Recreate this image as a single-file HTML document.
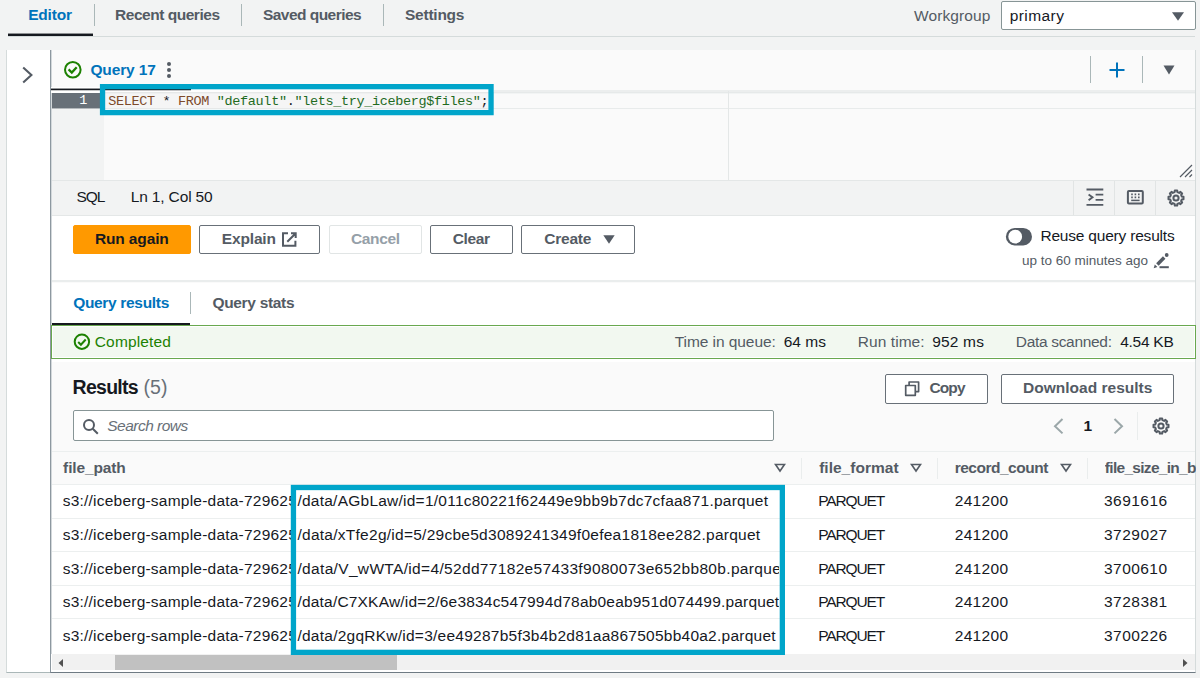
<!DOCTYPE html>
<html><head><meta charset="utf-8"><title>Athena query editor</title>
<style>
*{box-sizing:border-box;margin:0;padding:0}
html,body{width:1200px;height:678px;overflow:hidden;background:#f2f3f3}
body{position:relative;font-family:"Liberation Sans",sans-serif;font-size:15.5px;color:#16191f}
.a{position:absolute}
.t{position:absolute;white-space:pre;line-height:20px}
.btn{position:absolute;border:1px solid #687078;border-radius:2px;background:#fff;height:29px;top:225px}
.sep{position:absolute;width:1px;background:#d5dbdb}
.rl{position:absolute;left:52px;width:1143px;height:1px;background:#ecefef}
.cy{position:absolute;border:5px solid #00a1c9;z-index:5}
</style></head><body>

<!-- top tabs -->
<div class="sep" style="left:94px;top:4px;height:22px;background:#aab7b8"></div>
<div class="sep" style="left:241px;top:4px;height:22px;background:#aab7b8"></div>
<div class="sep" style="left:383px;top:4px;height:22px;background:#aab7b8"></div>
<div class="a" style="left:8px;top:36px;width:1187px;height:1px;background:#d5dbdb"></div>
<div class="a" style="left:8px;top:33px;width:85px;height:3px;background:linear-gradient(rgba(22,25,31,.45) 0 1px,#16191f 1px 3px)"></div>
<div class="a" style="left:1001px;top:1px;width:195px;height:29px;background:#fff;border:1px solid #879596;border-radius:2px"></div>
<svg class="a" style="left:1171px;top:11px" width="14" height="11" viewBox="0 0 14 11"><path d="M1 1.2h12L7 9.8z" fill="#545b64"/></svg>

<!-- left panel -->
<div class="a" style="left:6px;top:50px;width:45px;height:623px;background:#fff;border-left:1px solid #d5dbdb;border-bottom:1px solid #aab7b8"></div>
<svg class="a" style="left:20px;top:65px" width="16" height="20" viewBox="0 0 16 20"><path d="M3.2 2.4L11.4 9.9 3.2 17.4" fill="none" stroke="#545b64" stroke-width="2.1"/></svg>

<!-- main panel -->
<div class="a" style="left:50px;top:50px;width:1146px;height:623px;background:#fafafa;border-left:1px solid #8d98a0;box-shadow:inset 1px 0 0 #d3d8db;border-right:1px solid #d5dbdb;border-bottom:1px solid #6f7b84"></div>

<!-- query tab row -->
<svg class="a" style="left:63px;top:60px" width="20" height="20" viewBox="0 0 20 20"><circle cx="9.8" cy="9.7" r="7.8" fill="none" stroke="#1d8102" stroke-width="2"/><path d="M5.6 9.4l3.2 3.1 4.9-5.2" fill="none" stroke="#1d8102" stroke-width="2.3"/></svg>
<div class="a" style="left:167px;top:62px;width:4px;height:4px;border-radius:50%;background:#545b64;box-shadow:0 6px 0 #545b64,0 12px 0 #545b64"></div>
<div class="sep" style="left:1090px;top:56px;height:27px;background:#aab7b8"></div>
<div class="sep" style="left:1142px;top:56px;height:27px;background:#aab7b8"></div>
<svg class="a" style="left:1108px;top:61px" width="18" height="18" viewBox="0 0 18 18"><path d="M9 1.5v15M1.5 9h15" stroke="#0073bb" stroke-width="2" fill="none"/></svg>
<svg class="a" style="left:1163px;top:65px" width="12" height="10" viewBox="0 0 12 10"><path d="M0.5 0.5h11L6 9.5z" fill="#545b64"/></svg>

<!-- editor -->
<div class="a" style="left:52px;top:91px;width:52px;height:89px;background:#f2f3f3"></div>
<div class="a" style="left:51px;top:87px;width:55px;height:6px;background:#fff"></div>
<div class="a" style="left:104px;top:89px;width:390px;height:21px;background:#f5f5f5;border-top:3px solid #fdfdfd;border-bottom:1px solid #fcfcfc"></div>
<div class="a" style="left:104px;top:92px;width:390px;height:2px;background:linear-gradient(#e6e8e8 0 1px,#eff0f0 1px 2px)"></div>
<div class="a" style="left:104px;top:108px;width:390px;height:1px;background:#e6e8e8"></div>
<div class="a" style="left:494px;top:90px;width:701px;height:4px;background:linear-gradient(#eceeee 0 2px,#e6e9e9 2px 3px,#f2f4f4 3px 4px)"></div>
<div class="a" style="left:494px;top:108px;width:701px;height:1px;background:#e8ebeb"></div>
<div class="a" style="left:51px;top:88px;width:140px;height:3px;background:linear-gradient(rgba(22,25,31,.45) 0 1px,#16191f 1px 2px,rgba(22,25,31,.25) 2px 3px)"></div>
<div class="a" style="left:52px;top:93px;width:52px;height:16px;background:linear-gradient(#687078 0 15px,rgba(104,112,120,.45) 15px 16px)"></div>
<div class="sep" style="left:728px;top:91px;height:89px;background:#e4e7e7"></div>
<svg class="a" style="left:0;top:0;z-index:5" width="1200" height="678"><rect x="102.55" y="86.65" width="388.5" height="25.95" fill="none" stroke="#00a5ca" stroke-width="5.3"/><rect x="293.45" y="487.5" width="488.9" height="164.85" fill="none" stroke="#00a5ca" stroke-width="5.3"/></svg>
<svg class="a" style="left:1179px;top:164px" width="14" height="14" viewBox="0 0 14 14"><path d="M1 13L13 1M6 13l7-7M10.5 13l2.5-2.5" stroke="#545b64" stroke-width="1.2" fill="none"/></svg>

<!-- status bar -->
<div class="a" style="left:52px;top:180px;width:1143px;height:36px;background:#f2f3f3;border-top:1px solid #e4e7e7;border-bottom:1px solid #e4e7e7"></div>
<div class="sep" style="left:1073px;top:181px;height:34px;background:#e1e4e4"></div>
<div class="sep" style="left:1114px;top:181px;height:34px;background:#e1e4e4"></div>
<div class="sep" style="left:1155px;top:181px;height:34px;background:#e1e4e4"></div>

<svg class="a" style="left:1085.5px;top:187.8px" width="18" height="19" viewBox="0 0 18 19"><path d="M0.5 1.5h16.8M9.6 6.6h7.7M9.6 11.9h7.7M0.5 16.9h16.8" stroke="#545b64" stroke-width="1.9" fill="none"/><path d="M2.6 6.4l3.9 2.9-3.9 2.9" stroke="#545b64" stroke-width="1.9" fill="none"/></svg>
<svg class="a" style="left:1126px;top:188.8px" width="19" height="17" viewBox="0 0 19 17"><rect x="1.9" y="2" width="14.9" height="12.4" rx="1" fill="none" stroke="#545b64" stroke-width="2"/><path d="M5.2 5.4h1.6M8.6 5.4h1.6M12 5.4h1.6M5.2 8.4h1.6M8.6 8.4h1.6M12 8.4h1.6" stroke="#545b64" stroke-width="1.6"/><path d="M5.2 11.4h8.4" stroke="#545b64" stroke-width="1.5"/></svg>
<svg class="a" style="left:1166.9px;top:188.7px" width="18" height="18" viewBox="0 0 18 18"><path d="M7.60 3.17 L7.81 1.49 L10.19 1.49 L10.40 3.17 L12.13 3.88 L13.47 2.85 L15.15 4.53 L14.12 5.87 L14.83 7.60 L16.51 7.81 L16.51 10.19 L14.83 10.40 L14.12 12.13 L15.15 13.47 L13.47 15.15 L12.13 14.12 L10.40 14.83 L10.19 16.51 L7.81 16.51 L7.60 14.83 L5.87 14.12 L4.53 15.15 L2.85 13.47 L3.88 12.13 L3.17 10.40 L1.49 10.19 L1.49 7.81 L3.17 7.60 L3.88 5.87 L2.85 4.53 L4.53 2.85 L5.87 3.88Z" fill="none" stroke="#545b64" stroke-width="2" stroke-linejoin="round"/><circle cx="9" cy="9" r="2.6" fill="none" stroke="#545b64" stroke-width="2"/></svg>

<!-- buttons row -->
<div class="a" style="left:52px;top:216px;width:1143px;height:66px;background:#fff;border-bottom:2px solid #eaeded"></div>
<div class="btn" style="left:73px;width:118px;background:#ff9900;border-color:#ff9900"></div>
<div class="btn" style="left:199px;width:121px"></div>
<div class="btn" style="left:329px;width:93px;border-color:#e1e5e5"></div>
<div class="btn" style="left:430px;width:83px"></div>
<div class="btn" style="left:521px;width:114px"></div>
<svg class="a" style="left:603px;top:235px" width="12" height="9" viewBox="0 0 12 9"><path d="M0.3 0.3h11.4L6 8.7z" fill="#545b64"/></svg>
<svg class="a" style="left:281px;top:231px" width="17" height="17" viewBox="0 0 17 17"><path d="M7 2.3H2v12.4h12.4V9.7M10 2.3h4.7V7M14.5 2.5L6.3 10.7" stroke="#545b64" stroke-width="2" fill="none"/></svg>
<svg class="a" style="left:1000px;top:222px" width="40" height="30" viewBox="0 0 40 30"><rect x="5.9" y="5.9" width="26.1" height="17.5" rx="8.75" fill="#545b64"/><circle cx="15.2" cy="14.7" r="6.9" fill="#fff"/></svg>
<svg class="a" style="left:1153px;top:252px" width="17" height="17" viewBox="0 0 17 17"><path d="M0.7 16.2l1.1-3.7 2.6 2.6z" fill="#545b64"/><path d="M4.4 12.4L11.2 5.6" stroke="#545b64" stroke-width="3.5"/><circle cx="13.7" cy="3" r="1.9" fill="#545b64"/><path d="M6.5 15.2h9.3" stroke="#545b64" stroke-width="2"/></svg>

<!-- result tabs -->
<div class="a" style="left:52px;top:283px;width:1143px;height:42px;background:#fff"></div>
<div class="sep" style="left:190px;top:292px;height:22px;background:#aab7b8"></div>
<div class="a" style="left:52px;top:322.5px;width:138px;height:2px;background:#16191f"></div>

<!-- completed banner -->
<div class="a" style="left:51px;top:325px;width:1145px;height:34px;background:#f2f8f0;border:1px solid #69a84f;box-shadow:inset 0 0 0 1px #fff"></div>
<svg class="a" style="left:72px;top:332px" width="20" height="20" viewBox="0 0 20 20"><circle cx="9.9" cy="9.7" r="7.2" fill="none" stroke="#1d8102" stroke-width="2"/><path d="M6.2 10l2.7 2.7 4.8-5.2" fill="none" stroke="#1d8102" stroke-width="2"/></svg>

<div class="a" style="left:52px;top:359px;width:1143px;height:3px;background:#fff"></div>
<!-- results header -->
<div class="btn" style="left:885px;top:374px;width:103px;height:30px"></div>
<div class="btn" style="left:1001px;top:374px;width:173px;height:30px"></div>
<svg class="a" style="left:903px;top:380px" width="18" height="18" viewBox="0 0 18 18"><path d="M2.7 5.5h9.6v9.8H2.7z M6.1 5.2V2h9.5v9.6h-3" fill="none" stroke="#545b64" stroke-width="1.7" stroke-linejoin="round"/></svg>
<div class="a" style="left:73px;top:410px;width:701px;height:31px;background:#fff;border:1px solid #879596;border-radius:2px"></div>
<svg class="a" style="left:82px;top:418px" width="18" height="18" viewBox="0 0 18 18"><circle cx="7" cy="7" r="5" fill="none" stroke="#545b64" stroke-width="2"/><path d="M10.8 10.8l5 5" stroke="#545b64" stroke-width="2"/></svg>
<svg class="a" style="left:1051px;top:416px" width="14" height="20" viewBox="0 0 14 20"><path d="M11.5 3L4 10.2l7.5 7.2" fill="none" stroke="#9ba7a9" stroke-width="2"/></svg>
<svg class="a" style="left:1112px;top:416px" width="14" height="20" viewBox="0 0 14 20"><path d="M2.5 3L10 10.2l-7.5 7.2" fill="none" stroke="#9ba7a9" stroke-width="2"/></svg>
<div class="sep" style="left:1137px;top:412px;height:28px;background:#eaeded"></div>

<svg class="a" style="left:1151.5px;top:417px" width="18" height="18" viewBox="0 0 18 18"><path d="M7.60 3.17 L7.81 1.49 L10.19 1.49 L10.40 3.17 L12.13 3.88 L13.47 2.85 L15.15 4.53 L14.12 5.87 L14.83 7.60 L16.51 7.81 L16.51 10.19 L14.83 10.40 L14.12 12.13 L15.15 13.47 L13.47 15.15 L12.13 14.12 L10.40 14.83 L10.19 16.51 L7.81 16.51 L7.60 14.83 L5.87 14.12 L4.53 15.15 L2.85 13.47 L3.88 12.13 L3.17 10.40 L1.49 10.19 L1.49 7.81 L3.17 7.60 L3.88 5.87 L2.85 4.53 L4.53 2.85 L5.87 3.88Z" fill="none" stroke="#545b64" stroke-width="2" stroke-linejoin="round"/><circle cx="9" cy="9" r="2.6" fill="none" stroke="#545b64" stroke-width="2"/></svg>

<!-- table -->
<div class="rl" style="top:451px"></div>
<div class="a" style="left:52px;top:484px;width:1143px;height:171px;background:#fff"></div>
<div class="rl" style="top:484px"></div>
<div class="rl" style="top:518px"></div>
<div class="rl" style="top:551px"></div>
<div class="rl" style="top:585px"></div>
<div class="rl" style="top:618px"></div>
<div class="sep" style="left:801px;top:458px;height:21px;background:#eaeded"></div>
<div class="sep" style="left:937px;top:458px;height:21px;background:#eaeded"></div>
<div class="sep" style="left:1087px;top:458px;height:21px;background:#eaeded"></div>
<svg class="a" style="left:774px;top:463px" width="12" height="10" viewBox="0 0 12 10"><path d="M1.5 1.5h9L6 8z" fill="none" stroke="#545b64" stroke-width="1.6"/></svg>
<svg class="a" style="left:910px;top:463px" width="12" height="10" viewBox="0 0 12 10"><path d="M1.5 1.5h9L6 8z" fill="none" stroke="#545b64" stroke-width="1.6"/></svg>
<svg class="a" style="left:1060px;top:463px" width="12" height="10" viewBox="0 0 12 10"><path d="M1.5 1.5h9L6 8z" fill="none" stroke="#545b64" stroke-width="1.6"/></svg>

<!-- scrollbar -->
<div class="a" style="left:51px;top:654px;width:1144px;height:18px;background:#fff"></div><div class="a" style="left:52px;top:654px;width:1143px;height:16px;background:#f1f1f1"></div>
<div class="a" style="left:115px;top:655px;width:282px;height:15px;background:#c1c1c1"></div>
<svg class="a" style="left:57px;top:658px" width="8" height="10" viewBox="0 0 8 10"><path d="M6 1v8L1.5 5z" fill="#505050"/></svg>
<svg class="a" style="left:1181px;top:658px" width="8" height="10" viewBox="0 0 8 10"><path d="M2 1v8L6.5 5z" fill="#505050"/></svg>

<div class="t" style='left:28.20px;top:5px;font-size:15.5px;letter-spacing:-0.196px;color:#0073bb;font-weight:bold;'>Editor</div>
<div class="t" style='left:115.00px;top:5px;font-size:15.5px;letter-spacing:-0.468px;color:#545b64;font-weight:bold;'>Recent queries</div>
<div class="t" style='left:262.97px;top:5px;font-size:15.5px;letter-spacing:-0.538px;color:#545b64;font-weight:bold;'>Saved queries</div>
<div class="t" style='left:404.97px;top:5px;font-size:15.5px;letter-spacing:-0.236px;color:#545b64;font-weight:bold;'>Settings</div>
<div class="t" style='left:914.01px;top:6px;font-size:15.5px;letter-spacing:0.111px;color:#545b64;'>Workgroup</div>
<div class="t" style='left:1009.70px;top:6px;font-size:15.5px;letter-spacing:0.422px;color:#16191f;'>primary</div>
<div class="t" style='left:90.41px;top:60px;font-size:15.5px;letter-spacing:-0.137px;color:#0073bb;font-weight:bold;'>Query 17</div>
<div class="t" style='left:76.39px;top:187px;font-size:15.5px;letter-spacing:-1.020px;color:#16191f;'>SQL</div>
<div class="t" style='left:130.76px;top:187px;font-size:15.5px;letter-spacing:-0.151px;color:#16191f;'>Ln 1, Col 50</div>
<div class="t" style='left:94.90px;top:229px;font-size:15.5px;letter-spacing:-0.125px;color:#16191f;font-weight:bold;'>Run again</div>
<div class="t" style='left:221.80px;top:229px;font-size:15.5px;letter-spacing:-0.160px;color:#545b64;font-weight:bold;'>Explain</div>
<div class="t" style='left:350.90px;top:229px;font-size:15.5px;letter-spacing:-0.332px;color:#95a0a8;font-weight:bold;'>Cancel</div>
<div class="t" style='left:452.71px;top:229px;font-size:15.5px;letter-spacing:-0.346px;color:#545b64;font-weight:bold;'>Clear</div>
<div class="t" style='left:544.20px;top:229px;font-size:15.5px;letter-spacing:-0.201px;color:#545b64;font-weight:bold;'>Create</div>
<div class="t" style='left:1040.46px;top:226px;font-size:15.5px;letter-spacing:-0.203px;color:#16191f;'>Reuse query results</div>
<div class="t" style='left:1021.90px;top:251px;font-size:13.5px;letter-spacing:-0.002px;color:#545b64;'>up to 60 minutes ago</div>
<div class="t" style='left:73.16px;top:293px;font-size:15.5px;letter-spacing:-0.318px;color:#0073bb;font-weight:bold;'>Query results</div>
<div class="t" style='left:212.41px;top:293px;font-size:15.5px;letter-spacing:-0.311px;color:#545b64;font-weight:bold;'>Query stats</div>
<div class="t" style='left:94.75px;top:332px;font-size:15.5px;letter-spacing:0.156px;color:#1d8102;'>Completed</div>
<div class="t" style='left:674.68px;top:332px;font-size:15.5px;letter-spacing:-0.059px;color:#545b64;'>Time in queue:</div>
<div class="t" style='left:783.70px;top:332px;font-size:15.5px;letter-spacing:0.005px;color:#16191f;'>64 ms</div>
<div class="t" style='left:857.76px;top:332px;font-size:15.5px;letter-spacing:0.067px;color:#545b64;'>Run time:</div>
<div class="t" style='left:932.20px;top:332px;font-size:15.5px;letter-spacing:0.180px;color:#16191f;'>952 ms</div>
<div class="t" style='left:1015.76px;top:332px;font-size:15.5px;letter-spacing:-0.312px;color:#545b64;'>Data scanned:</div>
<div class="t" style='left:1120.16px;top:332px;font-size:15.5px;letter-spacing:-0.261px;color:#16191f;'>4.54 KB</div>
<div class="t" style='left:72.57px;top:377px;font-size:19.5px;letter-spacing:-0.724px;color:#16191f;font-weight:bold;'>Results</div>
<div class="t" style='left:143.41px;top:377px;font-size:19.5px;letter-spacing:0.167px;color:#687078;'>(5)</div>
<div class="t" style='left:107.25px;top:416px;font-size:15.5px;letter-spacing:-0.514px;color:#687078;font-style:italic;'>Search rows</div>
<div class="t" style='left:929.40px;top:378px;font-size:15.5px;letter-spacing:-0.850px;color:#545b64;font-weight:bold;'>Copy</div>
<div class="t" style='left:1023.00px;top:378px;font-size:15.5px;letter-spacing:0.015px;color:#545b64;font-weight:bold;'>Download results</div>
<div class="t" style='left:1083.50px;top:416px;font-size:15.5px;letter-spacing:0.000px;color:#16191f;font-weight:bold;'>1</div>
<div class="t" style='left:63.11px;top:458px;font-size:15.5px;letter-spacing:-0.139px;color:#545b64;font-weight:bold;'>file_path</div>
<div class="t" style='left:819.16px;top:458px;font-size:15.5px;letter-spacing:0.014px;color:#545b64;font-weight:bold;'>file_format</div>
<div class="t" style='left:954.70px;top:458px;font-size:15.5px;letter-spacing:-0.491px;color:#545b64;font-weight:bold;'>record_count</div>
<div class="t" style='left:1104.86px;top:458px;font-size:15.5px;letter-spacing:-0.704px;color:#545b64;font-weight:bold;width:91px;overflow:hidden;'>file_size_in_by</div>
<div class="t" style='left:62.69px;top:491px;font-size:15.5px;letter-spacing:0.222px;color:#16191f;width:229px;overflow:hidden;'>s3://iceberg-sample-data-729625</div>
<div class="t" style='left:297.45px;top:491px;font-size:15.5px;letter-spacing:0.239px;color:#16191f;width:482px;overflow:hidden;'>/data/AGbLaw/id=1/011c80221f62449e9bb9b7dc7cfaa871.parquet</div>
<div class="t" style='left:818.16px;top:491px;font-size:15.5px;letter-spacing:-1.122px;color:#16191f;'>PARQUET</div>
<div class="t" style='left:954.70px;top:491px;font-size:15.5px;letter-spacing:0.320px;color:#16191f;'>241200</div>
<div class="t" style='left:1104.00px;top:491px;font-size:15.5px;letter-spacing:0.464px;color:#16191f;'>3691616</div>
<div class="t" style='left:62.69px;top:525px;font-size:15.5px;letter-spacing:0.222px;color:#16191f;width:229px;overflow:hidden;'>s3://iceberg-sample-data-729625</div>
<div class="t" style='left:297.45px;top:525px;font-size:15.5px;letter-spacing:0.263px;color:#16191f;width:482px;overflow:hidden;'>/data/xTfe2g/id=5/29cbe5d3089241349f0efea1818ee282.parquet</div>
<div class="t" style='left:818.16px;top:525px;font-size:15.5px;letter-spacing:-1.122px;color:#16191f;'>PARQUET</div>
<div class="t" style='left:954.70px;top:525px;font-size:15.5px;letter-spacing:0.320px;color:#16191f;'>241200</div>
<div class="t" style='left:1104.00px;top:525px;font-size:15.5px;letter-spacing:0.476px;color:#16191f;'>3729027</div>
<div class="t" style='left:62.69px;top:559px;font-size:15.5px;letter-spacing:0.222px;color:#16191f;width:229px;overflow:hidden;'>s3://iceberg-sample-data-729625</div>
<div class="t" style='left:297.45px;top:559px;font-size:15.5px;letter-spacing:0.334px;color:#16191f;width:482px;overflow:hidden;'>/data/V_wWTA/id=4/52dd77182e57433f9080073e652bb80b.parquet</div>
<div class="t" style='left:818.16px;top:559px;font-size:15.5px;letter-spacing:-1.122px;color:#16191f;'>PARQUET</div>
<div class="t" style='left:954.70px;top:559px;font-size:15.5px;letter-spacing:0.320px;color:#16191f;'>241200</div>
<div class="t" style='left:1104.00px;top:559px;font-size:15.5px;letter-spacing:0.453px;color:#16191f;'>3700610</div>
<div class="t" style='left:62.69px;top:592px;font-size:15.5px;letter-spacing:0.222px;color:#16191f;width:229px;overflow:hidden;'>s3://iceberg-sample-data-729625</div>
<div class="t" style='left:297.45px;top:592px;font-size:15.5px;letter-spacing:0.193px;color:#16191f;width:482px;overflow:hidden;'>/data/C7XKAw/id=2/6e3834c547994d78ab0eab951d074499.parquet</div>
<div class="t" style='left:818.16px;top:592px;font-size:15.5px;letter-spacing:-1.122px;color:#16191f;'>PARQUET</div>
<div class="t" style='left:954.70px;top:592px;font-size:15.5px;letter-spacing:0.320px;color:#16191f;'>241200</div>
<div class="t" style='left:1104.00px;top:592px;font-size:15.5px;letter-spacing:0.475px;color:#16191f;'>3728381</div>
<div class="t" style='left:62.69px;top:626px;font-size:15.5px;letter-spacing:0.222px;color:#16191f;width:229px;overflow:hidden;'>s3://iceberg-sample-data-729625</div>
<div class="t" style='left:297.45px;top:626px;font-size:15.5px;letter-spacing:0.246px;color:#16191f;width:482px;overflow:hidden;'>/data/2gqRKw/id=3/ee49287b5f3b4b2d81aa867505bb40a2.parquet</div>
<div class="t" style='left:818.16px;top:626px;font-size:15.5px;letter-spacing:-1.122px;color:#16191f;'>PARQUET</div>
<div class="t" style='left:954.70px;top:626px;font-size:15.5px;letter-spacing:0.320px;color:#16191f;'>241200</div>
<div class="t" style='left:1104.00px;top:626px;font-size:15.5px;letter-spacing:0.464px;color:#16191f;'>3700226</div>
<div class="t" style='left:108.30px;top:92px;font-size:13.5px;letter-spacing:-0.349px;color:#16191f;font-family:"Liberation Mono",monospace;'><span style="color:#7d4a2b">SELECT</span> * <span style="color:#7d4a2b">FROM</span> <span style="color:#1f6b1f">"default"</span>.<span style="color:#1f6b1f">"lets_try_iceberg$files"</span>;</div>
<div class="t" style='left:79.30px;top:91px;font-size:13.5px;letter-spacing:0.000px;color:#fff;font-family:"Liberation Mono",monospace;'>1</div>
</body></html>
